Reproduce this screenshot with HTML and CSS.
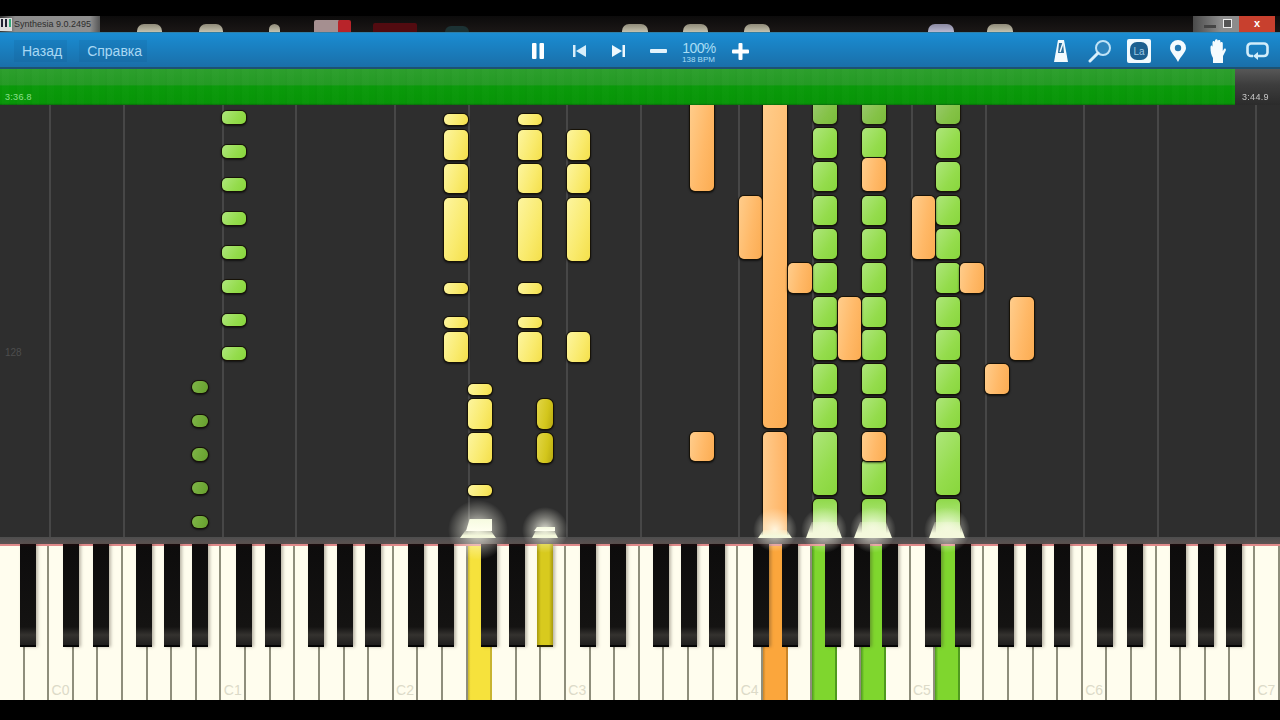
FILE: index.html
```html
<!DOCTYPE html>
<html>
<head>
    <title>Synthesia 9.0.2495</title>
    <link rel="stylesheet" href="styles.css">
</head>
<body>
    <div class="app">
        <div class="letterbox"></div>

        <div class="titlebar">
            <div class="title-app">
                <svg class="app-icon" width="12" height="13" viewBox="0 0 12 13">
                    <rect width="12" height="13" fill="#ddd"/>
                    <rect x="1" y="1" width="2" height="8" fill="#223"/>
                    <rect x="5" y="1" width="2" height="8" fill="#223"/>
                    <rect x="9" y="1" width="2" height="8" fill="#3a7"/>
                </svg>
                <span class="title-text">Synthesia 9.0.2495</span>
            </div>
            <span class="blob" style="left: 137px; width: 25px"></span>
            <span class="blob" style="left: 199px; width: 24px"></span>
            <span class="blob" style="left: 269px; width: 11px"></span>
            <span class="blob pink" style="left: 314px; width: 26px"></span>
            <span class="blob red" style="left: 338px; width: 13px"></span>
            <span class="blob maroon" style="left: 373px; width: 44px"></span>
            <span class="blob teal" style="left: 445px; width: 24px"></span>
            <span class="blob" style="left: 622px; width: 26px"></span>
            <span class="blob" style="left: 683px; width: 25px"></span>
            <span class="blob" style="left: 744px; width: 26px"></span>
            <span class="blob lavender" style="left: 928px; width: 26px"></span>
            <span class="blob" style="left: 987px; width: 26px"></span>
            <div class="win-controls">
                <span class="win-min"></span>
                <span class="win-max"></span>
                <span class="win-close">x</span>
            </div>
        </div>

        <div class="toolbar">
            <div class="menu">
                <a class="menu-btn">Назад</a>
                <a class="menu-btn">Справка</a>
            </div>

            <div class="transport">
                <svg class="pause" width="12" height="16" viewBox="0 0 12 16">
                    <rect width="4.5" height="16" rx="1" fill="#fff"/>
                    <rect x="7.5" width="4.5" height="16" rx="1" fill="#fff"/>
                </svg>
                <svg class="skip" width="13" height="12" viewBox="0 0 13 12">
                    <rect width="2.5" height="12" fill="#d8eefa"/>
                    <path d="M13 0 V12 L3 6 Z" fill="#d8eefa"/>
                </svg>
                <svg class="skip" width="13" height="12" viewBox="0 0 13 12">
                    <path d="M0 0 V12 L10 6 Z" fill="#eef8fd"/>
                    <rect x="10.5" width="2.5" height="12" fill="#eef8fd"/>
                </svg>
                <svg class="minus" width="17" height="4" viewBox="0 0 17 4">
                    <rect width="17" height="4" rx="1" fill="#e4f3fb"/>
                </svg>
                <div class="speed">
                    <div class="speed-pct">100%</div>
                    <div class="speed-bpm">138 BPM</div>
                </div>
                <svg class="plus" width="17" height="17" viewBox="0 0 17 17">
                    <rect y="6.5" width="17" height="4" rx="1" fill="#fff"/>
                    <rect x="6.5" width="4" height="17" rx="1" fill="#fff"/>
                </svg>
            </div>

            <div class="tools">
                <svg width="16" height="24" viewBox="0 0 16 24">
                    <path d="M5 1 H11 L15 23 H1 Z" fill="#f2fafe"/>
                    <path d="M6 4 H10 L11 14 H5 Z" fill="#2b6f9c"/>
                    <path d="M7 13 L10 4" stroke="#f2fafe" stroke-width="1.5"/>
                </svg>
                <svg width="24" height="24" viewBox="0 0 24 24">
                    <circle cx="15" cy="9" r="7" fill="#2f86bf" stroke="#bfe3f7" stroke-width="2"/>
                    <path d="M10 14 L2 22" stroke="#d9f0fb" stroke-width="3" stroke-linecap="round"/>
                </svg>
                <svg width="24" height="24" viewBox="0 0 24 24">
                    <rect width="24" height="24" rx="2" fill="#f2fafe"/>
                    <rect x="3" y="3" width="18" height="18" rx="7" fill="#1c5f8f"/>
                    <text x="12" y="16" class="box-label">La</text>
                </svg>
                <svg width="16" height="22" viewBox="0 0 16 22">
                    <path d="M8 22 C5 16 0 12 0 8 A8 8 0 0 1 16 8 C16 12 11 16 8 22 Z" fill="#f4fbfe"/>
                    <circle cx="8" cy="8" r="3.2" fill="#2379b3"/>
                </svg>
                <svg width="17" height="24" viewBox="0 0 17 24">
                    <path d="M1.5 9 C1.5 6 3 6 3.5 8 V3.5 C3.5 1.5 6 1.5 6 3.5 V1.8 C6 -0.2 8.8 -0.2 8.8 1.8 V2.5 C8.8 0.6 11.4 0.6 11.4 2.5 V4 C11.4 2.6 13.8 2.6 13.8 4.5 V12 L15 10 C16 9 17.4 10 16.8 11.5 L14 17 V24 H4 V19 C2 16 1.5 12 1.5 9 Z" fill="#f4fbfe"/>
                </svg>
                <svg width="23" height="18" viewBox="0 0 23 18">
                    <path d="M7 14 H5 A3.5 3.5 0 0 1 1.5 10.5 V5 A3.5 3.5 0 0 1 5 1.5 H18 A3.5 3.5 0 0 1 21.5 5 V10.5 A3.5 3.5 0 0 1 18 14 H11" fill="none" stroke="#d2edfa" stroke-width="2.6"/>
                    <path d="M12 10 V18 L7 14 Z" fill="#d2edfa"/>
                </svg>
            </div>
        </div>

        <div class="timeline">
            <div class="timeline-done"><span class="time-start">3:36.8</span></div>
            <div class="timeline-left"><span class="time-end">3:44.9</span></div>
        </div>

        <div class="stage" id="stage">
            <div class="roll" id="roll">
                <span class="roll-number">128</span>
            </div>
            <div class="strip"></div>
            <div class="piano" id="piano"></div>
        </div>
    </div>

    <script src="script.js"></script>
</body>
</html>
```

FILE: styles.css
```css
html, body {
    margin: 0;
    background: #000;
    overflow: hidden;
}
.app {
    width: 1280px;
    height: 720px;
    display: flex;
    flex-direction: column;
    font-family: "Liberation Sans", Arial, sans-serif;
    filter: blur(0.7px);
}
.letterbox {
    height: 16px;
    background: #000;
}

/* window title bar */
.titlebar {
    position: relative;
    height: 16px;
    background: linear-gradient(#0c0b0b, #1b1716);
    overflow: hidden;
}
.title-app {
    display: flex;
    align-items: center;
    gap: 2px;
    width: 100px;
    height: 16px;
    background: linear-gradient(90deg, #333 0, #8d8d8d 15%, #8f8f8f 90%, #555 100%);
}
.title-text {
    font-size: 9px;
    color: #2d2d2d;
    white-space: nowrap;
}
.blob {
    position: absolute;
    bottom: 0;
    height: 8px;
    border-radius: 7px 7px 0 0;
    background: linear-gradient(#8f8a78, #c4c1ae);
}
.blob.pink { height: 12px; border-radius: 2px 2px 0 0; background: #a58f90; }
.blob.red { height: 12px; border-radius: 2px 2px 0 0; background: #b8242a; }
.blob.maroon { height: 9px; border-radius: 2px 2px 0 0; background: #520b10; }
.blob.teal { height: 6px; background: #1c3234; }
.blob.lavender { background: linear-gradient(#8a88a0, #b8b8d0); }
.win-controls {
    position: absolute;
    right: 5px;
    top: 0;
    display: flex;
    width: 82px;
    height: 16px;
}
.win-min {
    position: relative;
    width: 28px;
    background: linear-gradient(90deg, #4a4a4a, #8c8c8c);
}
.win-min::after {
    content: "";
    position: absolute;
    left: 11px;
    bottom: 4px;
    width: 12px;
    height: 3px;
    background: #444;
}
.win-max {
    position: relative;
    width: 18px;
    background: #8c8c8c;
}
.win-max::after {
    content: "";
    position: absolute;
    left: 2px;
    top: 3px;
    width: 7px;
    height: 7px;
    border: 1px solid #eee;
    background: #555;
}
.win-close {
    flex: 1;
    text-align: center;
    font-size: 11px;
    line-height: 14px;
    font-weight: bold;
    color: #fff;
    background: #c8402e;
}

/* blue toolbar */
.toolbar {
    position: relative;
    display: flex;
    align-items: center;
    justify-content: space-between;
    height: 37px;
    box-sizing: border-box;
    padding: 2px 16px 0 14px;
    background: linear-gradient(#1b8dd4 0, #1a85c8 25%, #1a6fa9 100%);
    border-top: 1px solid #2d7fa8;
    border-bottom: 2px solid #1d5272;
}
.menu {
    display: flex;
    gap: 12px;
}
.menu-btn {
    padding: 3px 5px 3px 8px;
    font-size: 14px;
    color: #a8d8f4;
    background: rgba(16, 80, 130, 0.14);
}
.transport {
    position: absolute;
    left: 532px;
    top: 0;
    height: 36px;
    display: flex;
    align-items: center;
}
.pause { margin-right: 29px; }
.skip { margin-right: 26px; }
.minus { margin: 0 15px 0 -1px; }
.speed {
    width: 34px;
    margin-right: 16px;
    text-align: center;
    color: #a8ddf4;
    white-space: nowrap;
}
.speed-pct {
    font-size: 14px;
    line-height: 14px;
    margin-top: 2px;
    letter-spacing: -0.6px;
}
.speed-bpm {
    font-size: 8px;
    line-height: 9px;
    margin-left: -1px;
}
.tools {
    position: absolute;
    left: 1053px;
    top: 0;
    height: 36px;
    display: flex;
    align-items: center;
    gap: 20px;
}
.tools svg:nth-child(1) { margin-right: -1px; }
.tools svg:nth-child(2) { margin-right: -5px; }
.tools svg:nth-child(3) { margin-right: -1px; }
.tools svg:nth-child(4) { margin-right: 3px; }
.box-label {
    font-family: "Liberation Sans", Arial, sans-serif;
    font-size: 10px;
    fill: #9cc8e4;
    text-anchor: middle;
}

/* green progress bar */
.timeline {
    display: flex;
    height: 36px;
    font-size: 9px;
}
.timeline-done {
    position: relative;
    width: 1235px;
    background:
        repeating-linear-gradient(90deg, rgba(0, 0, 0, 0.015) 0 2px, rgba(255, 255, 255, 0.012) 2px 9px, rgba(0, 0, 0, 0) 9px 15px),
        linear-gradient(#2d9f2d 0, #249a24 44%, #0a9a0a 47%, #079507 95%, #0b6a0b 100%);
}
.timeline-left {
    position: relative;
    flex: 1;
    background: linear-gradient(#575757 0, #3d3d3d 44%, #2b2b2b 100%);
}
.time-start, .time-end {
    position: absolute;
    top: 23px;
    left: 5px;
    white-space: nowrap;
    letter-spacing: 0.3px;
}
.time-start { color: #8ee08e; }
.time-end { left: 7px; color: #c8c8c8; }

/* falling notes area */
.stage {
    position: relative;
    display: flex;
    flex-direction: column;
    height: 595px;
    overflow: hidden;
}
.roll {
    position: relative;
    height: 433px;
    background: #2e2e2e;
    overflow: hidden;
}
.roll-number {
    position: absolute;
    left: 5px;
    top: 242px;
    font-size: 10px;
    color: #4d4d4d;
}
.gridline {
    position: absolute;
    top: 0;
    bottom: 0;
    width: 2px;
    background: #474747;
}
.note {
    position: absolute;
    box-sizing: border-box;
    border-radius: 5px;
    box-shadow: 0 0 0 1px #171207, 0 1px 2px 1px rgba(0, 0, 0, 0.6);
}
.note.green { background: linear-gradient(125deg, #aee67c 0, #94dc4c 60%, #88d63c 100%); }
.note.orange { background: linear-gradient(100deg, #ffcd8c 0, #ffb968 55%, #fbac52 100%); }
.note.yellow { background: linear-gradient(110deg, #fdf5a0 0, #f9ea6c 60%, #f4df4a 100%); }
.note.olive { background: linear-gradient(100deg, #e2d648 0, #d3c61c 60%, #b8aa10 100%); border-radius: 6px; }
.note.moss { background: linear-gradient(110deg, #7fb648 0, #66a02c 100%); border-radius: 7px; }
.note.top { border-radius: 0 0 5px 5px; opacity: 0.85; }
.note.land { border-radius: 5px 5px 0 0; background: linear-gradient(#8fd94a 0, #c8f0a0 70%, #eafcd4 100%); }
.note.land.orange { background: linear-gradient(90deg, #ffcb8c, #ffb262); }
.strip {
    height: 7px;
    background: linear-gradient(#4d4d4d, #5e5454);
}

/* keyboard */
.piano {
    position: relative;
    display: flex;
    height: 155px;
    border-top: 2px solid #e08a8a;
    background: #000;
}
.white-key {
    flex: 1;
    display: flex;
    align-items: flex-end;
    justify-content: center;
    box-sizing: border-box;
    border-right: 2px solid #8f8e7c;
    background: #fffdee;
    font-size: 14px;
    line-height: 20px;
    color: #dcdac8;
}
.white-key.yellow { background: linear-gradient(90deg, #c8b430 0, #f6e23c 12%, #f6e23c 100%); border-right-color: #c8b430; }
.white-key.orange { background: linear-gradient(90deg, #c88428 0, #fba63c 12%, #fba63c 100%); border-right-color: #c88428; }
.white-key.green { background: linear-gradient(90deg, #4f9a1e 0, #7fd62e 14%, #7fd62e 100%); border-right-color: #4f9a1e; }
.black-key {
    position: absolute;
    top: -2px;
    width: 16px;
    height: 103px;
    box-sizing: border-box;
    border-bottom: 2px solid #050505;
    background: linear-gradient(#1a0a0c 0, #0d0c0c 3%, #141312 82%, #34322f 90%, #1f1e1d 100%);
    box-shadow: 2px 0 3px rgba(60, 55, 40, 0.35);
}
.black-key.olive {
    background: linear-gradient(90deg, #a89a10 0, #d8ca1e 25%, #d8ca1e 75%, #a89a10 100%);
    border-bottom-color: #2a2505;
}

/* key press sparks */
.flare {
    position: absolute;
    background: linear-gradient(#f6fbe0, #fffff0);
    clip-path: polygon(14% 0, 100% 0, 100% 100%, 0 100%);
}
.flare-base {
    position: absolute;
    background: linear-gradient(rgba(244, 248, 220, 0.3), #f4f8dc 70%);
    clip-path: polygon(16% 0, 84% 0, 100% 100%, 0 100%);
}
.glow {
    position: absolute;
    border-radius: 50%;
    background: radial-gradient(closest-side, rgba(255, 255, 240, 0.85), rgba(255, 255, 240, 0.35) 55%, rgba(255, 255, 240, 0));
}
```

FILE: script.js
```js
// page y of the top of the stage (everything below is given in page coordinates)
const STAGE_TOP = 105;
const KEY_W = 1280 / 52;

const roll = document.getElementById('roll');
const stage = document.getElementById('stage');
const piano = document.getElementById('piano');

// Grid lines sit on every C and F
for (let i = 2; i < 52; i += 7) {
    addGridline(i);
    if (i + 3 < 52) addGridline(i + 3);
}

function addGridline(key) {
    const line = document.createElement('div');
    line.className = 'gridline';
    line.style.left = (key * KEY_W) + 'px';
    roll.appendChild(line);
}

function addNote(cls, x, w, y1, y2) {
    const note = document.createElement('div');
    note.className = 'note ' + cls;
    note.style.left = x + 'px';
    note.style.width = w + 'px';
    note.style.top = (y1 - STAGE_TOP) + 'px';
    note.style.height = (y2 - y1) + 'px';
    roll.appendChild(note);
}

function addColumn(cls, x, w, spans) {
    spans.forEach(s => addNote(cls, x, w, s[0], s[1]));
}

// left hand pills
addColumn('green', 222, 24, [[111, 124], [145, 158], [178, 191], [212, 225], [246, 259], [280, 293], [314, 326], [347, 360]]);
addColumn('moss', 192, 16, [[381, 393], [415, 427], [448, 461], [482, 494], [516, 528]]);

// yellow chords
const chord = [[114, 125], [130, 160], [164, 193], [198, 261], [283, 294], [317, 328], [332, 362]];
addColumn('yellow', 443.5, 24, chord);
addColumn('yellow', 517.5, 24, chord);
addColumn('yellow', 566.5, 23.5, [[130, 160], [164, 193], [198, 261], [332, 362]]);
addColumn('yellow', 468, 24, [[384, 395], [399, 429], [433, 463], [485, 496]]);
addColumn('olive', 537, 16, [[399, 429], [433, 463]]);

// right hand green
const beat = [[128, 158], [162, 191], [196, 225], [229, 259], [263, 293], [297, 327], [330, 360], [364, 394], [398, 428]];
addNote('green top', 812.5, 24, 100, 124);
addColumn('green', 812.5, 24, beat);
addColumn('green', 812.5, 24, [[432, 495]]);
addNote('land', 812.5, 24, 499, 545);
addNote('green top', 861.5, 24, 100, 124);
addColumn('green', 861.5, 24, beat.slice(0, 1).concat(beat.slice(2)));
addColumn('green', 861.5, 24, [[459, 495]]);
addNote('land', 861.5, 24, 499, 545);
addNote('green top', 935.5, 24, 100, 124);
addColumn('green', 935.5, 24, beat);
addColumn('green', 935.5, 24, [[432, 495]]);
addNote('land', 935.5, 24, 499, 545);

// orange melody
addColumn('orange', 689.5, 24, [[100, 191], [432, 461]]);
addColumn('orange', 738.5, 23.5, [[196, 259]]);
addColumn('orange', 763, 24, [[100, 428]]);
addNote('land orange', 763, 24, 432, 545);
addColumn('orange', 787.5, 24, [[263, 293]]);
addColumn('orange', 837.5, 23.5, [[297, 360]]);
addColumn('orange', 861.5, 24, [[158, 191], [432, 461]]);
addColumn('orange', 911.5, 23.5, [[196, 259]]);
addColumn('orange', 960, 24, [[263, 293]]);
addColumn('orange', 1009.5, 24, [[297, 360]]);
addColumn('orange', 984.5, 24, [[364, 394]]);

// Keyboard: 52 white keys, starting on A
const pressedWhite = { 19: 'yellow', 31: 'orange', 33: 'green', 35: 'green', 38: 'green' };
for (let i = 0; i < 52; i++) {
    const key = document.createElement('div');
    key.className = 'white-key ' + (pressedWhite[i] || '');
    if (i % 7 === 2 && !pressedWhite[i]) key.textContent = 'C' + ((i - 2) / 7);
    piano.appendChild(key);
}

// Black keys lean away from the middle of each group, offset by the next white key
const blackOffset = { 1: 3.4, 3: -2.5, 4: 2.5, 6: -3.7, 0: 0 };
for (let i = 1; i < 52; i++) {
    if (blackOffset[i % 7] === undefined) continue;
    const key = document.createElement('div');
    key.className = 'black-key' + (i === 22 ? ' olive' : '');
    key.style.left = (i * KEY_W + blackOffset[i % 7] - 8) + 'px';
    piano.appendChild(key);
}

function addFx(cls, x, w, y1, y2) {
    const el = document.createElement('div');
    el.className = cls;
    el.style.left = x + 'px';
    el.style.width = w + 'px';
    el.style.top = (y1 - STAGE_TOP) + 'px';
    el.style.height = (y2 - y1) + 'px';
    stage.appendChild(el);
}

// Sparks where a note touches the keys: [centre x, base width, glow size, flare height]
[[478, 36, 60, 8], [545, 26, 46, 8], [775, 34, 44, 8], [824, 36, 46, 16], [873, 38, 46, 16], [947, 36, 46, 16]].forEach(f => {
    addFx('glow', f[0] - f[2] / 2, f[2], 530 - f[2] / 2, 530 + f[2] / 2);
    addFx('flare-base', f[0] - f[1] / 2, f[1], 538 - f[3], 538);
});
addFx('flare', 466, 26, 519, 531);
addFx('flare', 534, 21, 527, 531);
```
